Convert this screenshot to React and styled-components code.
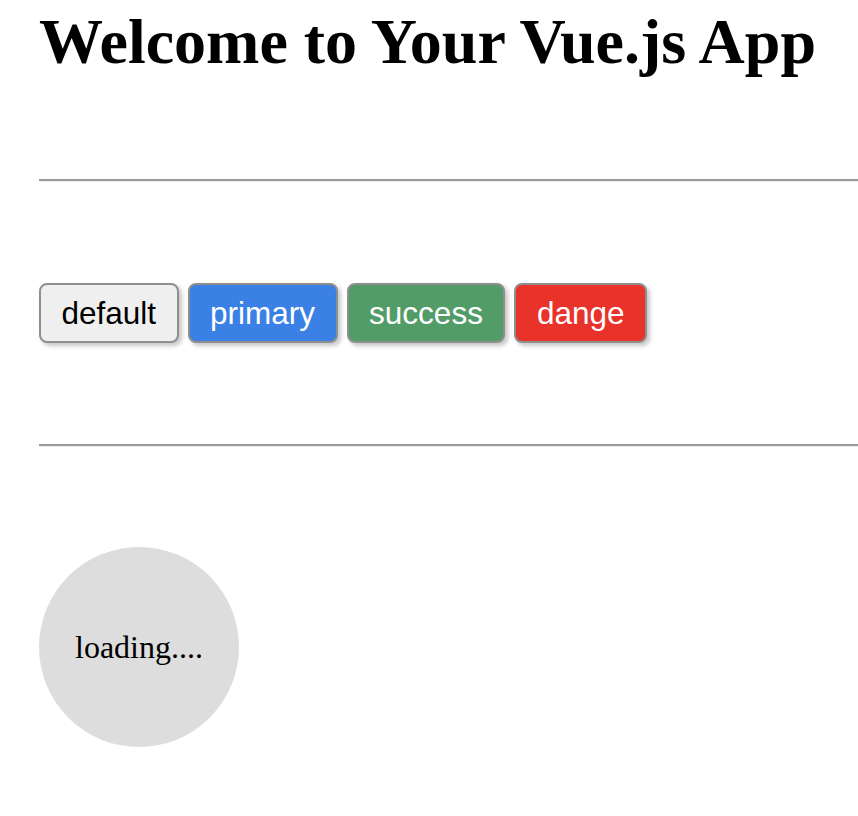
import React from 'react';
import styled, { createGlobalStyle } from 'styled-components';

const GlobalStyle = createGlobalStyle`
  body {
    margin: 0;
    background: #fff;
    font-family: "Liberation Serif", "Times New Roman", serif;
  }
`;

const Page = styled.div`
  display: flex;
  flex-direction: column;
  align-items: flex-start;
  padding: 7px 0 0 39px;
`;

const Title = styled.h1`
  margin: 0;
  font-size: 64px;
  font-weight: bold;
  line-height: 69px;
  color: #000;
  white-space: nowrap;
`;

const Rule = styled.hr`
  align-self: stretch;
  margin: ${p => p.top}px 0 0;
  border: 0;
  border-top: 2px solid #9a9a9a;
  border-bottom: 1px solid #eee;
`;

const ButtonRow = styled.div`
  display: flex;
  gap: 9px;
  margin-top: 101px;
`;

const colors = {
  default: { bg: '#efefef', fg: '#000' },
  primary: { bg: '#3a80e5', fg: '#fff' },
  success: { bg: '#529c68', fg: '#fff' },
  danger: { bg: '#e8322a', fg: '#fff' }
};

const Button = styled.button`
  height: 60px;
  padding: 0 20.5px;
  border: 2px solid #8f8f8f;
  border-radius: 8px;
  background: ${p => colors[p.kind].bg};
  color: ${p => colors[p.kind].fg};
  font-family: "Liberation Sans", Arial, sans-serif;
  font-size: 31.5px;
  line-height: 56px;
  box-shadow: 3px 3px 4px rgba(0, 0, 0, 0.22);
  cursor: pointer;
`;

const Loading = styled.div`
  display: flex;
  align-items: center;
  justify-content: center;
  width: 200px;
  height: 200px;
  margin-top: 100px;
  border-radius: 50%;
  background: #dddddd;
  font-size: 32px;
  color: #000;
`;

export default function App() {
  return (
    <>
      <GlobalStyle />
      <Page>
        <Title>Welcome to Your Vue.js App</Title>
        <Rule top={103} />
        <ButtonRow>
          <Button kind="default">default</Button>
          <Button kind="primary">primary</Button>
          <Button kind="success">success</Button>
          <Button kind="danger">dange</Button>
        </ButtonRow>
        <Rule top={101} />
        <Loading>loading....</Loading>
      </Page>
    </>
  );
}
